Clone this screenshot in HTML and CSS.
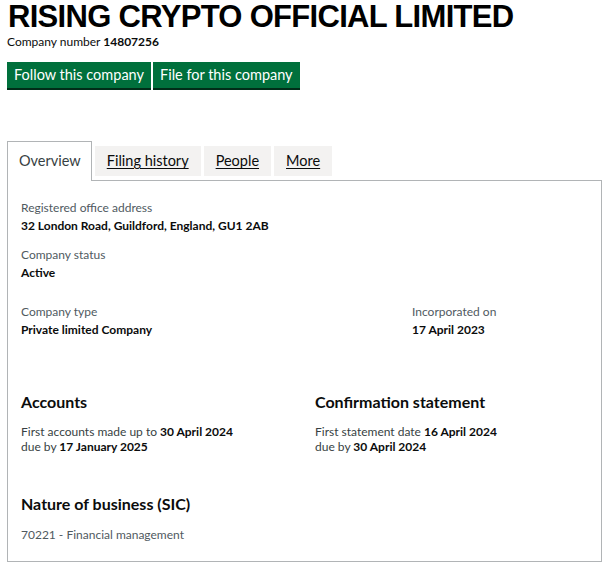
FILE: index.html
```html
<!DOCTYPE html>
<html lang="en">
<head>
    <meta charset="UTF-8">
    <title>RISING CRYPTO OFFICIAL LIMITED</title>
    <link rel="stylesheet" href="styles.css">
</head>
<body>

    <h1 class="company-name">RISING CRYPTO OFFICIAL LIMITED</h1>
    <p class="company-number">Company number <strong>14807256</strong></p>

    <div class="actions">
        <a class="btn" href="#">Follow this company</a>
        <a class="btn" href="#">File for this company</a>
    </div>

    <ul class="tabs">
        <li class="tab active">Overview</li>
        <li class="tab"><a href="#">Filing history</a></li>
        <li class="tab"><a href="#">People</a></li>
        <li class="tab"><a href="#">More</a></li>
    </ul>

    <div class="panel">
        <dl class="field">
            <dt>Registered office address</dt>
            <dd>32 London Road, Guildford, England, GU1 2AB</dd>
        </dl>
        <dl class="field">
            <dt>Company status</dt>
            <dd>Active</dd>
        </dl>

        <div class="row type-row">
            <dl class="field company-type">
                <dt>Company type</dt>
                <dd>Private limited Company</dd>
            </dl>
            <dl class="field">
                <dt>Incorporated on</dt>
                <dd>17 April 2023</dd>
            </dl>
        </div>

        <div class="row deadlines">
            <div class="col">
                <h2>Accounts</h2>
                <p>First accounts made up to <strong>30 April 2024</strong><br>
                due by <strong>17 January 2025</strong></p>
            </div>
            <div class="col">
                <h2>Confirmation statement</h2>
                <p>First statement date <strong>16 April 2024</strong><br>
                due by <strong>30 April 2024</strong></p>
            </div>
        </div>

        <h2>Nature of business (SIC)</h2>
        <p class="sic">70221 - Financial management</p>
    </div>

</body>
</html>
```

FILE: styles.css
```css
body {
    margin: 0;
    padding: 0 8px 0 7px;
    font-family: Lato, "Noto Sans", sans-serif;
    color: #0b0c0c;
    background: #ffffff;
}

.company-name {
    font-family: "Liberation Sans", Arial, sans-serif;
    font-weight: bold;
    font-size: 31px;
    line-height: 32px;
    letter-spacing: -0.7px;
    margin: 0 0 0 1px;
    padding-top: 1px;
    color: #000000;
}

.company-number {
    margin: 1px 0 0;
    font-size: 12px;
    line-height: 16px;
}

.company-number strong {
    font-weight: 700;
}

.actions {
    display: flex;
    gap: 2px;
    margin-top: 12px;
}

.btn {
    display: block;
    background-color: #00703c;
    color: white;
    text-decoration: none;
    font-size: 14.5px;
    line-height: 26px;
    padding: 0 7px;
    box-shadow: 0 2px 0 #002d18;
}

.tabs {
    list-style: none;
    display: flex;
    align-items: flex-end;
    margin: 53px 0 0;
    padding: 0;
    gap: 3px;
}

.tab {
    background-color: #f3f2f1;
    font-size: 14.5px;
    height: 30px;
    line-height: 30px;
    padding: 0 12px;
    margin-bottom: 4px;
}

.tab a {
    color: #0b0c0c;
    text-decoration: underline;
    text-underline-offset: 2px;
}

.tab.active {
    background-color: white;
    border: 1px solid #b1b4b6;
    border-bottom: none;
    height: 39px;
    line-height: 38px;
    margin-bottom: -1px;
    padding: 0 10px 0 11px;
    position: relative;
    z-index: 1;
    color: #383f43;
}

.panel {
    border: 1px solid #b1b4b6;
    width: 580px;
    padding: 18px 0 17px 13px;
}

.field {
    margin: 0 0 11px;
}

dt {
    font-size: 12px;
    line-height: 18px;
    color: #505a5f;
}

dd {
    margin: 0;
    font-size: 12px;
    line-height: 18px;
    font-weight: bold;
}

.row {
    display: flex;
}

.type-row {
    margin-top: 21px;
}

.company-type {
    flex: none;
    width: 391px;
}

.deadlines {
    margin-top: 42px;
}

.deadlines .col {
    flex: none;
    width: 294px;
}

h2 {
    font-size: 16px;
    line-height: 20px;
    font-weight: bold;
    margin: 0 0 12px;
}

.deadlines p {
    margin: 0;
    font-size: 12px;
    line-height: 15px;
    color: #383f43;
}

.deadlines strong {
    color: #0b0c0c;
}

.deadlines + h2 {
    margin-top: 40px;
}

.sic {
    margin: 0;
    font-size: 12px;
    line-height: 18px;
    color: #505a5f;
}
```
